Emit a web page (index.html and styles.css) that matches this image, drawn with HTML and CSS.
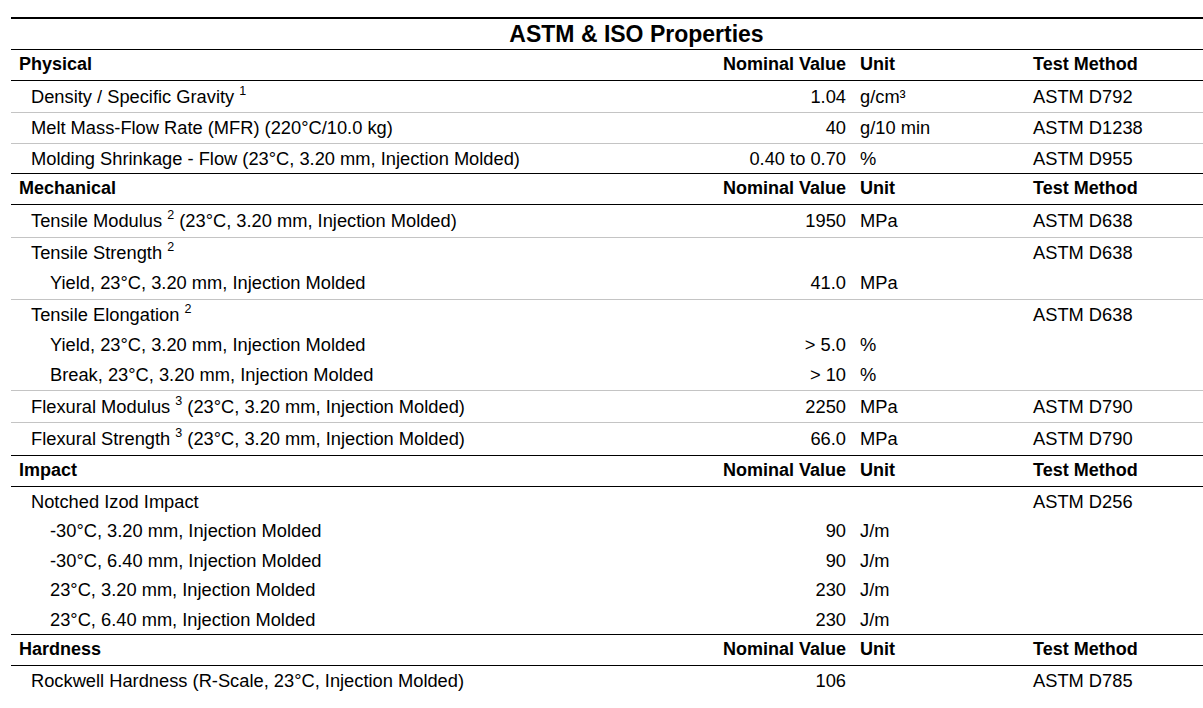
FILE: index.html
```html
<!DOCTYPE html>
<html lang="en">
<head>
<meta charset="utf-8">
<title>ASTM &amp; ISO Properties</title>
<link rel="stylesheet" href="styles.css">
</head>
<body>
<div class="table">
  <div class="title">ASTM &amp; ISO Properties</div>

  <div class="section">
    <div class="row head"><span class="label">Physical</span><span class="val">Nominal Value</span><span class="unit">Unit</span><span class="method">Test Method</span></div>
    <div class="row item sup-row"><span class="label">Density / Specific Gravity <sup>1</sup></span><span class="val">1.04</span><span class="unit">g/cm³</span><span class="method">ASTM D792</span></div>
    <div class="row item"><span class="label">Melt Mass-Flow Rate (MFR) (220°C/10.0 kg)</span><span class="val">40</span><span class="unit">g/10 min</span><span class="method">ASTM D1238</span></div>
    <div class="row item short"><span class="label">Molding Shrinkage - Flow (23°C, 3.20 mm, Injection Molded)</span><span class="val">0.40 to 0.70</span><span class="unit">%</span><span class="method">ASTM D955</span></div>
  </div>

  <div class="section">
    <div class="row head"><span class="label">Mechanical</span><span class="val">Nominal Value</span><span class="unit">Unit</span><span class="method">Test Method</span></div>
    <div class="row item sup-row tall"><span class="label">Tensile Modulus <sup>2</sup> (23°C, 3.20 mm, Injection Molded)</span><span class="val">1950</span><span class="unit">MPa</span><span class="method">ASTM D638</span></div>
    <div class="group padded">
      <div class="row"><span class="label">Tensile Strength <sup>2</sup></span><span class="val"></span><span class="unit"></span><span class="method">ASTM D638</span></div>
      <div class="row sub"><span class="label">Yield, 23°C, 3.20 mm, Injection Molded</span><span class="val">41.0</span><span class="unit">MPa</span><span class="method"></span></div>
    </div>
    <div class="group">
      <div class="row"><span class="label">Tensile Elongation <sup>2</sup></span><span class="val"></span><span class="unit"></span><span class="method">ASTM D638</span></div>
      <div class="row sub"><span class="label">Yield, 23°C, 3.20 mm, Injection Molded</span><span class="val">&gt; 5.0</span><span class="unit">%</span><span class="method"></span></div>
      <div class="row sub"><span class="label">Break, 23°C, 3.20 mm, Injection Molded</span><span class="val">&gt; 10</span><span class="unit">%</span><span class="method"></span></div>
    </div>
    <div class="row item sup-row"><span class="label">Flexural Modulus <sup>3</sup> (23°C, 3.20 mm, Injection Molded)</span><span class="val">2250</span><span class="unit">MPa</span><span class="method">ASTM D790</span></div>
    <div class="row item sup-row tall"><span class="label">Flexural Strength <sup>3</sup> (23°C, 3.20 mm, Injection Molded)</span><span class="val">66.0</span><span class="unit">MPa</span><span class="method">ASTM D790</span></div>
  </div>

  <div class="section">
    <div class="row head"><span class="label">Impact</span><span class="val">Nominal Value</span><span class="unit">Unit</span><span class="method">Test Method</span></div>
    <div class="group dense">
      <div class="row"><span class="label">Notched Izod Impact</span><span class="val"></span><span class="unit"></span><span class="method">ASTM D256</span></div>
      <div class="row sub"><span class="label">-30°C, 3.20 mm, Injection Molded</span><span class="val">90</span><span class="unit">J/m</span><span class="method"></span></div>
      <div class="row sub"><span class="label">-30°C, 6.40 mm, Injection Molded</span><span class="val">90</span><span class="unit">J/m</span><span class="method"></span></div>
      <div class="row sub"><span class="label">23°C, 3.20 mm, Injection Molded</span><span class="val">230</span><span class="unit">J/m</span><span class="method"></span></div>
      <div class="row sub"><span class="label">23°C, 6.40 mm, Injection Molded</span><span class="val">230</span><span class="unit">J/m</span><span class="method"></span></div>
    </div>
  </div>

  <div class="section">
    <div class="row head"><span class="label">Hardness</span><span class="val">Nominal Value</span><span class="unit">Unit</span><span class="method">Test Method</span></div>
    <div class="row item"><span class="label">Rockwell Hardness (R-Scale, 23°C, Injection Molded)</span><span class="val">106</span><span class="unit"></span><span class="method">ASTM D785</span></div>
  </div>
</div>
</body>
</html>
```

FILE: styles.css
```css
html, body {
  margin: 0;
  padding: 0;
  overflow: hidden;
  background: #ffffff;
}

body {
  font-family: "Liberation Sans", Arial, sans-serif;
  font-size: 18.3px;
  color: #000000;
}

.table {
  margin: 17px 0 0 11px;
  width: 1251px;
  border-top: 2px solid #000000;
}

.title {
  height: 30px;
  line-height: 30px;
  text-align: center;
  font-weight: bold;
  font-size: 23px;
}

.row {
  display: grid;
  grid-template-columns: 689px 146px 187px 1fr;
  line-height: 30px;
  white-space: nowrap;
}

.row .label {
  padding-left: 20px;
}

.row .val {
  text-align: right;
}

.row .unit {
  padding-left: 14px;
}

.head {
  font-weight: bold;
  font-size: 18px;
  border-top: 1px solid #000000;
  border-bottom: 1px solid #000000;
  line-height: 29px;
  padding-bottom: 1px;
}

.head .label {
  padding-left: 8px;
}

.item,
.group {
  border-bottom: 1px solid #c4c4c4;
}

.section > .item:last-child,
.section > .group:last-child {
  border-bottom: none;
}

.item.short {
  line-height: 29px;
}

.sup-row {
  padding-top: 1px;
}

.sup-row.tall {
  padding-bottom: 1px;
}

.group.padded {
  padding-bottom: 1px;
}

.group.dense .row {
  line-height: 29.4px;
}

.sub .label {
  padding-left: 39px;
}

sup {
  font-size: 12.5px;
  line-height: 0;
  vertical-align: 8px;
}
```
